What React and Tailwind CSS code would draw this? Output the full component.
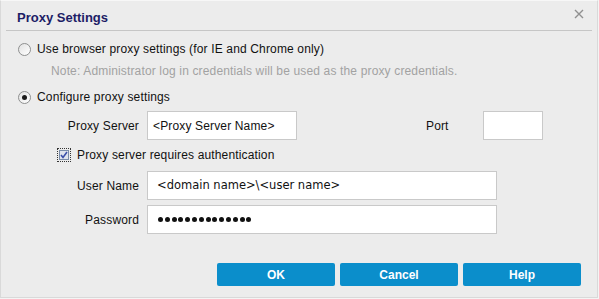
import React from "react";

const Radio = ({ checked }) => (
  <span className="w-[13px] h-[13px] rounded-full border border-[#8e8f8f] bg-gradient-to-br from-[#e2e2e2] to-white flex items-center justify-center shrink-0">
    {checked && <span className="w-[5px] h-[5px] rounded-full bg-[#1a1a1a]" />}
  </span>
);

const Checkbox = () => (
  <span className="w-[14px] h-[14px] border border-dotted border-[#333] flex items-center justify-center shrink-0">
    <span className="w-[10px] h-[10px] border border-[#7a8ca8] bg-[#dfe3ec] flex items-center justify-center">
      <svg width="8" height="8" viewBox="0 0 8 8">
        <path d="M1 4 L3 6.5 L7 1" fill="none" stroke="#3b4fa8" strokeWidth="1.6" />
      </svg>
    </span>
  </span>
);

const Field = ({ className, children }) => (
  <div className={`h-[29px] bg-white border border-[#c9c9c9] flex items-center ${className}`}>
    {children}
  </div>
);

export default function App() {
  return (
    <div className="w-[599px] h-[299px] bg-[#f4f4f4] font-['Liberation_Sans',Arial,sans-serif] text-[12px] tracking-[0.15px] text-[#111]">
      <div className="w-[598px] h-[298px] bg-[#ececec] border-r border-b border-l border-[#d9d9d9] border-t-[#f7f7f7] border-t flex flex-col">
        <div className="mx-[5px] h-[30px] border-b border-[#c6c6c6] flex items-center justify-between pl-[11px] pr-[8px]">
          <span className="text-[13px] font-bold text-[#1d1d66] pt-[4px] tracking-normal">Proxy Settings</span>
          <svg width="10" height="10" viewBox="0 0 10 10" className="mb-[4px]">
            <path d="M1 1 L9 9 M9 1 L1 9" stroke="#909090" strokeWidth="1.4" />
          </svg>
        </div>

        <div className="mt-[8px] h-[20px] flex items-center pl-[17px] gap-[6px]">
          <Radio />
          <span>Use browser proxy settings (for IE and Chrome only)</span>
        </div>
        <div className="mt-[2px] h-[20px] flex items-center pl-[50px] text-[#a2a2a2]">
          Note: Administrator log in credentials will be used as the proxy credentials.
        </div>

        <div className="mt-[6px] h-[20px] flex items-center pl-[17px] gap-[6px]">
          <Radio checked />
          <span>Configure proxy settings</span>
        </div>

        <div className="mt-[4px] flex items-center">
          <span className="w-[138px] text-right">Proxy Server</span>
          <Field className="ml-[8px] w-[150px] pl-[5px]">&lt;Proxy Server Name&gt;</Field>
          <span className="ml-[129px] w-[22px]">Port</span>
          <Field className="ml-[35px] w-[60px]" />
        </div>

        <div className="mt-[5px] h-[20px] flex items-center pl-[56px] gap-[6px]">
          <Checkbox />
          <span>Proxy server requires authentication</span>
        </div>

        <div className="mt-[6px] flex items-center">
          <span className="w-[138px] text-right">User Name</span>
          <Field className="ml-[8px] w-[350px] pl-[9px] font-['DejaVu_Sans',sans-serif] text-[11.5px] tracking-normal">
            &lt;domain name&gt;\&lt;user name&gt;
          </Field>
        </div>

        <div className="mt-[5px] flex items-center">
          <span className="w-[138px] text-right">Password</span>
          <Field className="ml-[8px] w-[350px] pl-[10px] gap-[1.8px]">
            {Array.from({ length: 14 }).map((_, i) => (
              <span key={i} className="w-[5px] h-[5px] rounded-full bg-[#111]" />
            ))}
          </Field>
        </div>

        <div className="mt-[29px] flex pl-[216px] gap-[5px]">
          {["OK", "Cancel", "Help"].map((label) => (
            <button
              key={label}
              className="w-[118px] h-[23px] rounded-[2px] bg-[#0b8ecb] text-white font-bold text-[12px] tracking-normal flex items-center justify-center"
            >
              {label}
            </button>
          ))}
        </div>
      </div>
    </div>
  );
}
